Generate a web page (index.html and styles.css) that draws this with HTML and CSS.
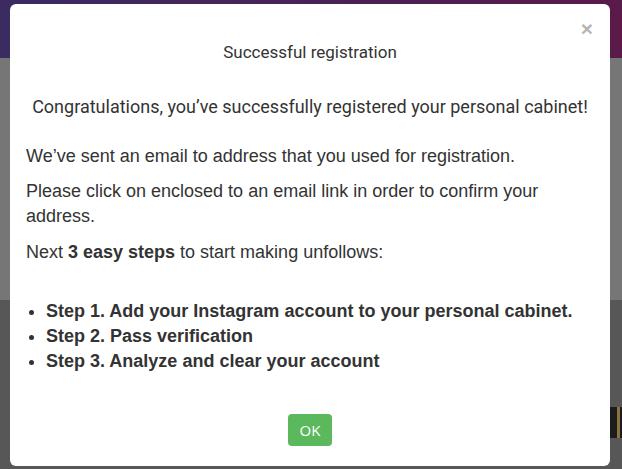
FILE: index.html
```html
<!DOCTYPE html>
<html>
<head>
<meta charset="utf-8">
<link rel="stylesheet" href="styles.css">
</head>
<body>
<div class="page">
  <div class="topbar"></div>
  <div class="band"></div>
  <div class="lower">
    <div class="darkbar"><span class="gold"></span></div>
  </div>
</div>
<div class="modal">
  <button class="close" type="button">×</button>
  <h4 class="title">Successful registration</h4>
  <p class="lead">Congratulations, you’ve successfully registered your personal cabinet!</p>
  <div class="body">
    <p class="p1">We’ve sent an email to address that you used for registration.</p>
    <p class="p2">Please click on enclosed to an email link in order to confirm your address.</p>
    <p class="p3">Next <b>3 easy steps</b> to start making unfollows:</p>
    <ul class="steps">
      <li>Step 1. Add your Instagram account to your personal cabinet.</li>
      <li>Step 2. Pass verification</li>
      <li>Step 3. Analyze and clear your account</li>
    </ul>
  </div>
  <div class="footer">
    <button class="ok" type="button">OK</button>
  </div>
</div>
</body>
</html>
```
FILE: styles.css
```css
html, body {
  margin: 0;
  padding: 0;
  width: 622px;
  height: 469px;
  overflow: hidden;
}
body {
  font-family: "Liberation Sans", Arial, sans-serif;
  color: #333;
  background: #575757;
}
.page {
  display: flex;
  flex-direction: column;
  height: 469px;
}
.topbar {
  height: 58px;
  background: linear-gradient(90deg, #3a2b60 0%, #4a2256 55%, #5a1a4a 100%);
}
.band {
  height: 242px;
  background: #767676;
}
.lower {
  flex: 1;
  background: #575757;
  display: flex;
  flex-direction: column;
  align-items: flex-end;
  padding-top: 107px;
}
.darkbar {
  width: 14px;
  height: 31px;
  background: #1c1c1c;
  display: flex;
  justify-content: flex-end;
}
.gold {
  width: 3px;
  margin-right: 2px;
  background: #8a7440;
}
.modal {
  position: absolute;
  left: 10px;
  top: 4px;
  width: 600px;
  height: 462px;
  box-sizing: border-box;
  background: #fff;
  border-radius: 6px;
  padding: 36px 16px 0;
}
.close {
  position: absolute;
  top: 14px;
  right: 17px;
  border: 0;
  background: transparent;
  padding: 0;
  font-family: "Liberation Sans", Arial, sans-serif;
  font-weight: bold;
  font-size: 21px;
  line-height: 21px;
  color: #b5b5b5;
}
.title {
  margin: 0;
  text-align: center;
  font-family: Roboto, "Liberation Sans", sans-serif;
  font-weight: 400;
  font-size: 17px;
  line-height: 24px;
  color: #333;
}
.lead {
  margin: 31px 0 0;
  text-align: center;
  font-family: Roboto, "Liberation Sans", sans-serif;
  font-size: 18px;
  line-height: 24px;
  color: #333;
}
.body {
  margin-top: 25px;
  font-size: 18px;
  line-height: 25px;
}
.body p {
  margin: 0;
}
.body .p2 {
  margin-top: 10px;
}
.body .p3 {
  margin-top: 11px;
}
.steps {
  margin: 34px 0 0;
  padding-left: 20px;
  font-weight: bold;
}
.footer {
  margin-top: 40px;
  display: flex;
  justify-content: center;
}
.ok {
  width: 44px;
  height: 32px;
  border: 0;
  border-radius: 4px;
  background: #5cb85c;
  color: #fff;
  font-family: "Open Sans", "Liberation Sans", sans-serif;
  font-size: 15px;
  padding: 0;
}
```
